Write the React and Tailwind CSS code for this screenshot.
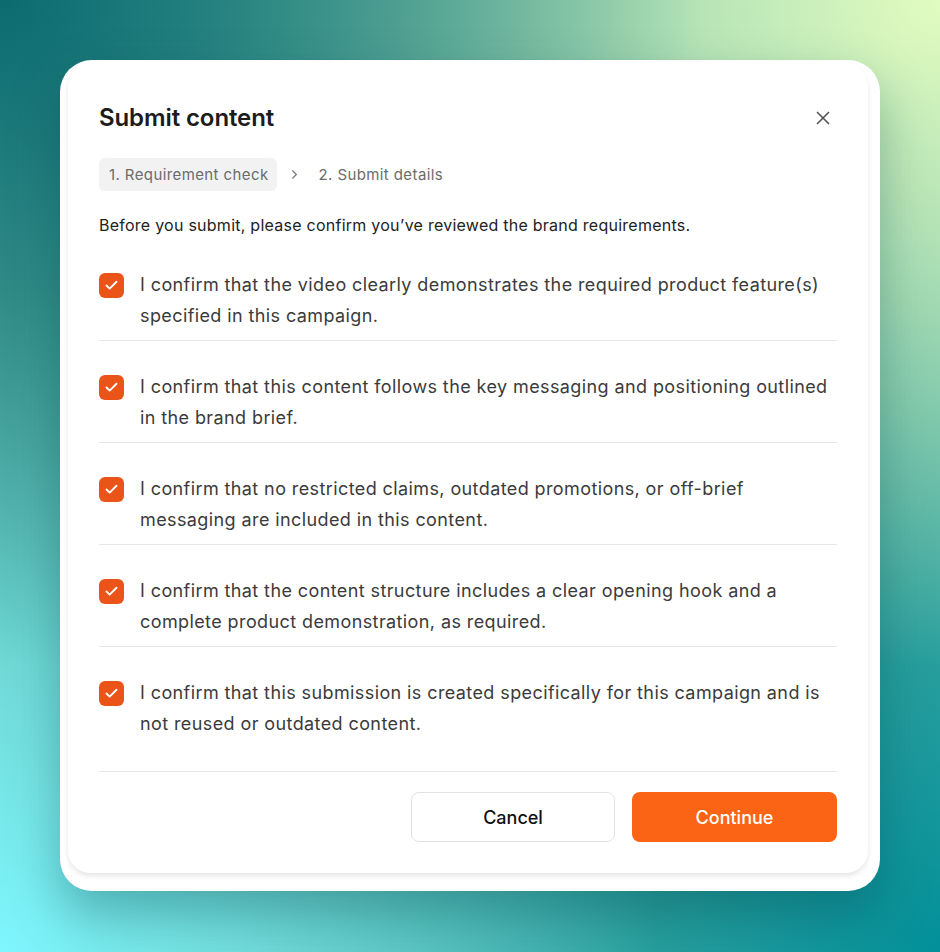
import React, { useState } from 'react';
import { X, ChevronRight, Check } from 'lucide-react';

const ITEMS = [
  'I confirm that the video clearly demonstrates the required product feature(s) specified in this campaign.',
  'I confirm that this content follows the key messaging and positioning outlined in the brand brief.',
  'I confirm that no restricted claims, outdated promotions, or off-brief messaging are included in this content.',
  'I confirm that the content structure includes a clear opening hook and a complete product demonstration, as required.',
  'I confirm that this submission is created specifically for this campaign and is not reused or outdated content.',
];

export default function App() {
  const [checked, setChecked] = useState(ITEMS.map(() => true));

  const toggle = (i) => setChecked((c) => c.map((v, j) => (j === i ? !v : v)));

  return (
    <div className="w-[940px] h-[952px] overflow-hidden font-['Inter',sans-serif] bg-[#5cb3a3] bg-[radial-gradient(ellipse_75%_70%_at_0%_0%,#0b6b70_0%,rgba(11,107,112,0)_100%),radial-gradient(ellipse_80%_70%_at_100%_0%,#e2fcc0_0%,rgba(170,225,170,0)_100%),radial-gradient(ellipse_70%_70%_at_0%_100%,#7ef6fd_0%,rgba(126,246,253,0)_100%),radial-gradient(ellipse_75%_75%_at_100%_100%,#03909a_0%,rgba(3,144,154,0)_100%)] pt-[60px] pl-[60px]">
      {/* outer white frame */}
      <div className="w-[820px] bg-white rounded-[32px] pl-2 pr-3 pb-[18px] shadow-[0_24px_50px_rgba(0,70,75,0.35)]">
        <div className="rounded-t-[28px] rounded-b-[22px] bg-white shadow-[0_3px_5px_rgba(0,0,0,0.10)] px-[31px] pt-[42px] pb-[31px]">
          <div className="flex items-center justify-between">
            <h1 className="text-[24px] leading-[32px] font-semibold tracking-[-0.1px] text-[#1c1c1c]">Submit content</h1>
            <button type="button" className="mr-[3px] text-[#555] cursor-pointer">
              <X size={22} strokeWidth={1.8} />
            </button>
          </div>

          <div className="mt-6 flex items-center text-[15px] leading-[20px] tracking-[0.4px] text-[#6b6b6b]">
            <span className="bg-[#f2f2f3] rounded-md pl-[10px] pr-[8px] py-[6.5px]">1. Requirement check</span>
            <ChevronRight size={15} strokeWidth={1.8} className="ml-[10px] mr-[17px] text-[#777]" />
            <span>2. Submit details</span>
          </div>

          <p className="mt-[22px] mb-[2px] text-[16px] leading-[24px] tracking-[0.25px] text-[#222]">
            Before you submit, please confirm you’ve reviewed the brand requirements.
          </p>

          <ul>
            {ITEMS.map((text, i) => (
              <li
                key={i}
                className={`flex items-start gap-4 pt-[30px] pb-[9px] ${i < ITEMS.length - 1 ? 'border-b border-[#e6e6e6]' : ''}`}
              >
                <button
                  type="button"
                  onClick={() => toggle(i)}
                  className={`mt-[4px] w-[25px] h-[25px] shrink-0 rounded-[6px] flex items-center justify-center cursor-pointer ${checked[i] ? 'bg-[#ea5419]' : 'border border-[#ccc] bg-white'}`}
                >
                  {checked[i] && <Check size={15} strokeWidth={3} className="text-white" />}
                </button>
                <span className="text-[18px] leading-[31px] tracking-[0.4px] text-[#3b3b3b]">{text}</span>
              </li>
            ))}
          </ul>

          <div className="mt-[23px] border-t border-[#e6e6e6] pt-5 flex justify-end gap-[17px]">
            <button
              type="button"
              className="w-[204px] h-[50px] rounded-lg border border-[#e3e3e3] bg-white text-[18px] font-medium text-[#111] cursor-pointer"
            >
              Cancel
            </button>
            <button
              type="button"
              className="w-[205px] h-[50px] rounded-lg bg-[#fa6414] text-[18px] font-medium text-white cursor-pointer"
            >
              Continue
            </button>
          </div>
        </div>
      </div>
    </div>
  );
}
